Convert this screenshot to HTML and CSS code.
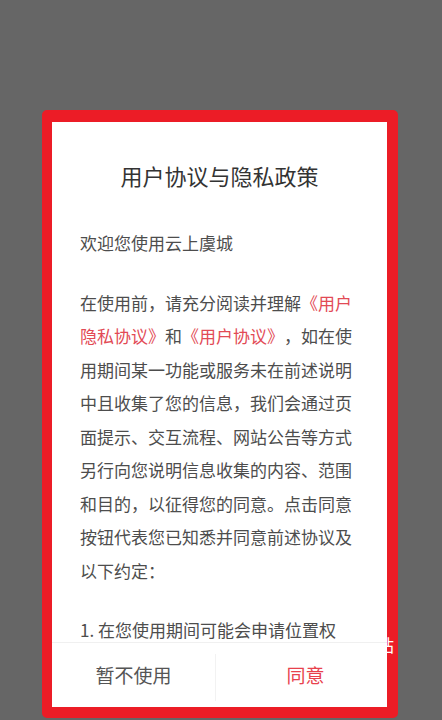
FILE: index.html
```html
<!DOCTYPE html>
<html lang="zh-CN">
<head>
<meta charset="utf-8">
<title>用户协议与隐私政策</title>
<link rel="stylesheet" href="styles.css">
</head>
<body>
<div class="dialog">
  <div class="sheet">
    <h1 class="title">用户协议与隐私政策</h1>
    <div class="content">
      <p class="para">欢迎您使用云上虞城</p>
      <p class="para">在使用前，请充分阅读并理解<span class="link">《用户隐私协议》</span>和<span class="link">《用户协议》</span>，如在使用期间某一功能或服务未在前述说明中且收集了您的信息，我们会通过页面提示、交互流程、网站公告等方式另行向您说明信息收集的内容、范围和目的，以征得您的同意。点击同意按钮代表您已知悉并同意前述协议及以下约定：</p>
      <p class="para">1. 在您使用期间可能会申请位置权限，用于为您提供附近的服务信息。</p>
    </div>
    <div class="footer">
      <button class="btn btn-cancel">暂不使用</button>
      <span class="divider"></span>
      <button class="btn btn-ok">同意</button>
    </div>
  </div>
  <span class="bleed"><span class="bleed-char">站</span></span>
</div>
</body>
</html>
```

FILE: styles.css
```css
html, body {
  margin: 0;
  padding: 0;
}
body {
  background: #666666;
  width: 442px;
  height: 720px;
  overflow: hidden;
  font-family: "Noto Sans CJK SC", "Noto Sans", sans-serif;
  padding-top: 110px;
  box-sizing: border-box;
}
.dialog {
  position: relative;
  margin-left: 42px;
  width: 356px;
  height: 608px;
  box-sizing: border-box;
  border-style: solid;
  border-color: #ec1c26;
  border-width: 12px 11px 11px 10px;
  border-radius: 5px;
  background: #ec1c26;
}
.sheet {
  background: #ffffff;
  height: 100%;
  display: flex;
  flex-direction: column;
  overflow: hidden;
}
.title {
  margin: 0;
  padding-top: 38px;
  font-size: 22px;
  line-height: 30px;
  font-weight: normal;
  color: #333333;
  text-align: center;
}
.content {
  flex: 1;
  overflow: hidden;
  padding: 36px 28px 0 28px;
}
.para {
  margin: 0 0 26px 0;
  font-size: 17px;
  line-height: 33.5px;
  color: #4d4d4d;
  text-spacing-trim: space-all;
}
.link {
  color: #e24a55;
}
.footer {
  height: 64px;
  border-top: 1px solid #f0f0f0;
  display: flex;
  align-items: center;
  flex-shrink: 0;
}
.btn {
  flex: 1;
  height: 100%;
  border: none;
  background: #ffffff;
  font-family: inherit;
  font-size: 19px;
  padding: 0 0 2px 0;
  cursor: pointer;
}
.btn-cancel {
  color: #555555;
}
.btn-ok {
  color: #e8424d;
  padding-left: 8px;
}
.divider {
  width: 1px;
  height: 47px;
  margin-top: 4px;
  background: #f2f2f2;
}
.bleed {
  position: absolute;
  left: 332px;
  top: 514px;
  width: 10px;
  height: 18px;
  overflow: hidden;
}
.bleed-char {
  display: block;
  margin-left: -7px;
  font-size: 17px;
  line-height: 18px;
  color: #ffffff;
}
```
